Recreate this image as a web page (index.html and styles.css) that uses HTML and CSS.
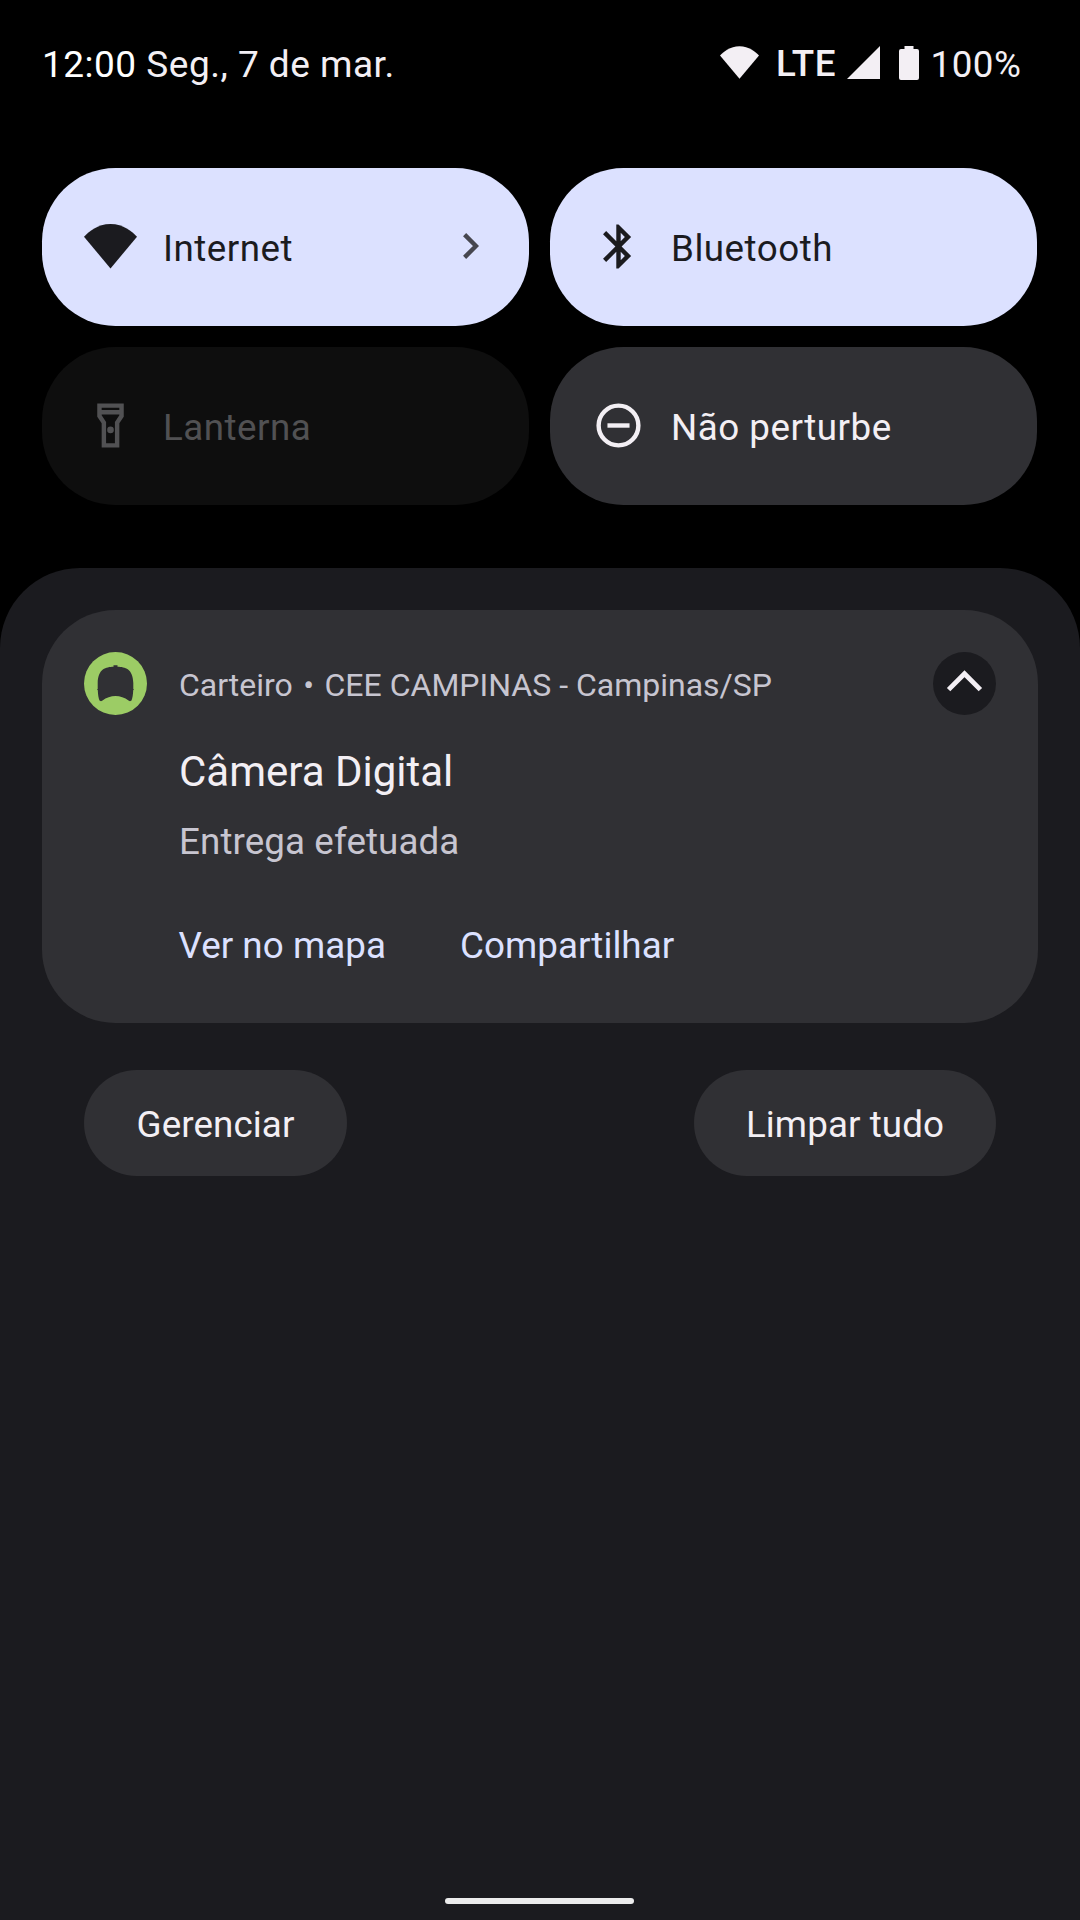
FILE: index.html
```html
<!DOCTYPE html>
<html lang="pt-BR">
<head>
<meta charset="utf-8">
<title>Notificações</title>
<link rel="stylesheet" href="styles.css">
</head>
<body>
<div class="screen">
  <header class="status">
    <div class="clock"><span class="time">12:00</span> Seg., 7 de mar.</div>
    <div class="system">
      <svg class="wifi-small" viewBox="0 0 53 44.5"><path fill="currentColor" d="M0 12.7C5 7.5 13.5 0 26.5 0S48 7.5 53 12.7L26.5 44.5Z"/></svg>
      <span class="network">LTE</span>
      <svg class="signal" viewBox="0 0 33 33"><path fill="currentColor" d="M33 0V33H0Z"/></svg>
      <svg class="battery" viewBox="0 0 20 34"><path fill="currentColor" d="M5.5 0h9v3H18a2 2 0 0 1 2 2v27a2 2 0 0 1-2 2H2a2 2 0 0 1-2-2V5a2 2 0 0 1 2-2h3.5Z"/></svg>
      <span class="percent">100%</span>
    </div>
  </header>

  <section class="tiles">
    <div class="tile on">
      <svg class="icon wifi" viewBox="0 0 53 44.5"><path fill="currentColor" d="M0 12.7C5 7.5 13.5 0 26.5 0S48 7.5 53 12.7L26.5 44.5Z"/></svg>
      <span class="label">Internet</span>
      <svg class="chevron" viewBox="0 0 16 26"><path fill="none" stroke="currentColor" stroke-width="4.4" d="M1.6 1.6 13 13 1.6 24.4"/></svg>
    </div>
    <div class="tile on">
      <svg class="icon" viewBox="0 0 24 24"><path fill="currentColor" d="M17.71 7.71 12 2h-1v7.59L6.41 5 5 6.41 10.59 12 5 17.59 6.41 19 11 14.41V22h1l5.71-5.71-4.3-4.29 4.3-4.29zM13 5.83l1.88 1.88L13 9.59V5.83zm1.88 10.46L13 18.17v-3.76l1.88 1.88z"/></svg>
      <span class="label">Bluetooth</span>
    </div>
    <div class="tile disabled">
      <svg class="icon" viewBox="0 0 24 24"><path fill="currentColor" d="M18 2H6v6l2 3v11h8V11l2-3V2zm-2 2v1H8V4h8zm-2 6.4V20h-4v-9.61l-2-3V7h8v.39l-2 3.01z"/><circle cx="12" cy="14" r="1.5" fill="currentColor"/></svg>
      <span class="label">Lanterna</span>
    </div>
    <div class="tile">
      <svg class="icon" viewBox="0 0 24 24"><circle cx="12" cy="12" r="9" fill="none" stroke="currentColor" stroke-width="2"/><path fill="currentColor" d="M7 11h10v2H7z"/></svg>
      <span class="label">Não perturbe</span>
    </div>
  </section>

  <main class="shade">
    <article class="card">
      <svg class="app-icon" viewBox="0 0 63 63"><circle cx="31.5" cy="31.5" r="31.5" fill="#9ccc65"/><path fill="#303034" d="M29.5 14.7V13.2h4v1.5C41 15 49 16.5 49.3 31v6l.7.5-.8.7C49 43 48.5 46 47.5 48.5L46 49.2 44.5 48.5C37 42.5 26 42.500 18.500 48.500L17 49.200 15.500 48.500C14.500 46 14 43 13.800 38.200L13 37.500l.700-.500v-6C14 16.500 22 15 29.500 14.700Z"/></svg>
      <div class="content">
        <div class="source">Carteiro <span class="dot">•</span> CEE CAMPINAS - Campinas/SP</div>
        <h1 class="title">Câmera Digital</h1>
        <p class="text">Entrega efetuada</p>
        <div class="actions"><span class="action">Ver no mapa</span><span class="action">Compartilhar</span></div>
      </div>
      <svg class="expander" viewBox="0 0 63 63"><circle cx="31.5" cy="31.5" r="31.5" fill="#1b1b1f"/><path fill="none" stroke="#f3eff4" stroke-width="4.8" d="M15.6 37.6 31.5 21.7 47.4 37.6"/></svg>
    </article>
    <div class="footer">
      <span class="button manage">Gerenciar</span>
      <span class="button clear">Limpar tudo</span>
    </div>
    <div class="handle"></div>
  </main>
</div>
</body>
</html>
```
FILE: styles.css
```css
* { box-sizing: border-box; }
body { margin: 0; background: #000; }
svg { display: block; flex: none; }
.screen {
  width: 1080px;
  height: 1920px;
  display: flex;
  flex-direction: column;
  background: #000;
  color: #f3eff4;
  font: 400 36.75px/44px Roboto, "Noto Sans", sans-serif;
  letter-spacing: 0.5px;
  white-space: nowrap;
}
.status {
  height: 168px;
  padding: 42px 60px 0 42px;
  display: flex;
  justify-content: space-between;
  align-items: flex-start;
}
.clock { padding-top: 1px; font-size: 37px; }
.time { color: #fff; }
.system { display: flex; align-items: flex-start; }
.wifi-small { width: 39px; height: 33px; margin-top: 4px; }
.network { font-weight: 500; width: 72px; padding: 0 0 0 17px; }
.signal { width: 33px; height: 33px; margin: 4px 0 0 16px; }
.battery { width: 20px; height: 34px; margin: 4px 0 0 19px; }
.percent { width: 101px; padding: 1px 0 0 11.5px; }

.tiles {
  display: grid;
  grid-template-columns: 487px 487px;
  grid-auto-rows: 158px;
  gap: 21px;
  padding: 0 42px;
}
.tile {
  display: flex;
  align-items: center;
  padding: 0 50px 2px 42px;
  border-radius: 73.5px;
  background: #303034;
}
.tile.on { background: #dce1ff; color: #1b1b1f; }
.tile.disabled { background: #0e0e0e; color: #515153; }
.icon { width: 53px; height: 53px; }
.icon.wifi { height: 44.5px; margin-top: 1px; }
.label { margin-left: 26px; padding-top: 5px; flex: 1; }
.chevron { width: 16px; height: 26px; color: #46464f; }

.shade {
  flex: 1;
  margin-top: 63px;
  padding: 42px 42px 16px;
  display: flex;
  flex-direction: column;
  border-radius: 80px 80px 0 0;
  background: #1b1b1f;
}
.card {
  height: 413px;
  padding: 42px;
  display: flex;
  align-items: flex-start;
  border-radius: 73.5px;
  background: #303034;
  letter-spacing: 0.05px;
}
.app-icon, .expander { width: 63px; height: 63px; }
.content { flex: 1; padding-left: 32px; }
.source { font-size: 32px; line-height: 38px; padding-top: 14px; color: #c7c5d0; letter-spacing: 0; }
.dot { margin: 0 2.5px; }
.title { margin: 43px 0 0; font-size: 42px; line-height: 50px; font-weight: 400; letter-spacing: 0; }
.text { margin: 23px 0 0; color: #c7c5d0; letter-spacing: 0.1px; }
.actions { display: flex; gap: 74px; margin: 60px 0 0 -0.5px; color: #dce1ff; }
.footer { display: flex; justify-content: space-between; margin-top: 47px; padding: 0 42px; letter-spacing: 0.1px; }
.button {
  height: 106px;
  padding-top: 3px;
  display: flex;
  align-items: center;
  justify-content: center;
  border-radius: 53px;
  background: #303034;
}
.manage { width: 263px; }
.clear { width: 302px; }
.handle { width: 189px; height: 6px; margin: auto 0 0 403px; border-radius: 3px; background: #ececec; }
```
